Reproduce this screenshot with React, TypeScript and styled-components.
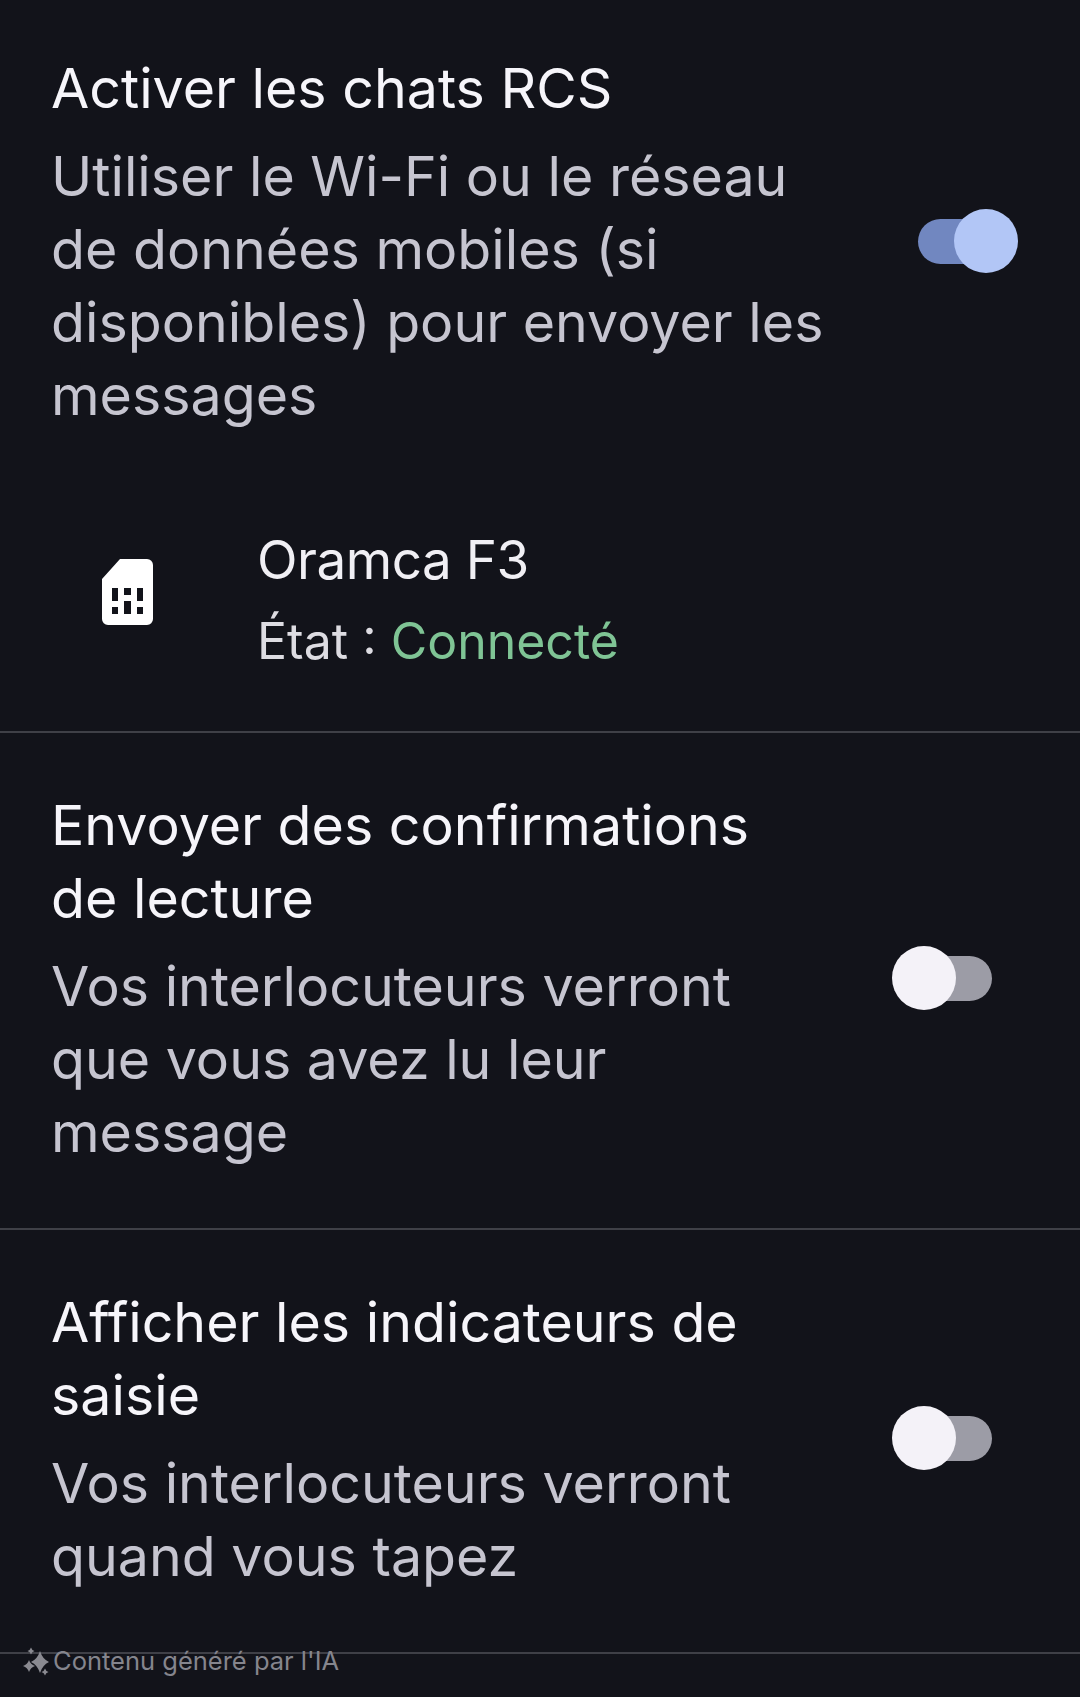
import React from 'react';
import styled, { createGlobalStyle } from 'styled-components';

const GlobalStyle = createGlobalStyle`
    html, body {
        margin: 0;
        padding: 0;
        background: #12131a;
    }
`;

const Page = styled.div`
    width: 1080px;
    height: 1697px;
    overflow: hidden;
    position: relative;
    background: #12131a;
    font-family: Inter, Roboto, sans-serif;
`;

const Section = styled.section<{ $top: number; $bottom: number; $divider?: boolean }>`
    padding: ${(p) => p.$top}px 0 ${(p) => p.$bottom}px 51px;
    border-bottom: ${(p) => (p.$divider ? '2px solid #3f4047' : 'none')};
`;

const Row = styled.div`
    display: flex;
    align-items: center;
    justify-content: space-between;
    padding-right: 88px;
`;

const TextBlock = styled.div<{ $width: number }>`
    width: ${(p) => p.$width}px;
    display: flex;
    flex-direction: column;
    gap: 15px;
`;

const Title = styled.div`
    font-size: 55.5px;
    line-height: 73px;
    color: #f6f5fa;
`;

const Subtitle = styled.div`
    font-size: 55.5px;
    line-height: 73px;
    color: #c6c5d0;
`;

const Track = styled.div<{ $on?: boolean }>`
    position: relative;
    width: 74px;
    height: 45px;
    border-radius: 23px;
    background: ${(p) => (p.$on ? '#7187c0' : '#9c9ca6')};
`;

const Thumb = styled.div<{ $on?: boolean }>`
    position: absolute;
    top: -10px;
    ${(p) => (p.$on ? 'right: -26px;' : 'left: -26px;')}
    width: 64px;
    height: 64px;
    border-radius: 50%;
    background: ${(p) => (p.$on ? '#b2c6f6' : '#f4f2f8')};
`;

const SimRow = styled.div`
    display: flex;
    align-items: center;
    gap: 104px;
    padding: 88px 0 50px 51px;
`;

const SimIcon = styled.svg`
    width: 51px;
    height: 66px;
    margin-bottom: 16px;
    flex: none;
`;

const SimText = styled.div`
    display: flex;
    flex-direction: column;
`;

const SimName = styled.div`
    font-size: 53px;
    line-height: 82px;
    letter-spacing: -0.5px;
    color: #f0eff4;
`;

const SimStatus = styled.div`
    font-size: 50px;
    line-height: 80px;
    color: #dddce2;
`;

const Connected = styled.span`
    color: #7fc495;
`;

const AiBadge = styled.div`
    position: absolute;
    left: 22px;
    top: 1645px;
    display: flex;
    align-items: center;
    gap: 1px;
    font-size: 25.5px;
    line-height: 30px;
    color: #85858d;
`;

const Toggle = ({ on }: { on?: boolean }) => (
    <Track $on={on}>
        <Thumb $on={on} />
    </Track>
);

const App = () => {
    return (
        <Page>
            <GlobalStyle />
            <Section $top={51} $bottom={0}>
                <Row>
                    <TextBlock $width={790}>
                        <Title>Activer les chats RCS</Title>
                        <Subtitle>
                            Utiliser le Wi-Fi ou le réseau de données mobiles (si disponibles) pour envoyer les messages
                        </Subtitle>
                    </TextBlock>
                    <Toggle on />
                </Row>
            </Section>
            <Section $top={0} $bottom={0} $divider>
                <SimRow>
                    <SimIcon viewBox="0 0 51 66">
                        <path
                            fill="#ffffff"
                            fillRule="evenodd"
                            d="M18 0H45a6 6 0 0 1 6 6V60a6 6 0 0 1-6 6H6a6 6 0 0 1-6-6V20ZM10 29h6v13h-6ZM10 48h6v7h-6ZM22 29h7v7h-7ZM22 42h7v13h-7ZM35 29h6v13h-6ZM35 48h6v7h-6Z"
                        />
                    </SimIcon>
                    <SimText>
                        <SimName>Oramca F3</SimName>
                        <SimStatus>
                            État : <Connected>Connecté</Connected>
                        </SimStatus>
                    </SimText>
                </SimRow>
            </Section>
            <Section $top={55} $bottom={60} $divider>
                <Row>
                    <TextBlock $width={720}>
                        <Title>Envoyer des confirmations de lecture</Title>
                        <Subtitle>Vos interlocuteurs verront que vous avez lu leur message</Subtitle>
                    </TextBlock>
                    <Toggle />
                </Row>
            </Section>
            <Section $top={55} $bottom={60} $divider>
                <Row>
                    <TextBlock $width={720}>
                        <Title>Afficher les indicateurs de saisie</Title>
                        <Subtitle>Vos interlocuteurs verront quand vous tapez</Subtitle>
                    </TextBlock>
                    <Toggle />
                </Row>
            </Section>
            <AiBadge>
                <svg width="30" height="32" viewBox="0 0 30 32">
                    <path
                        fill="#8a8a91"
                        d="M18 6Q20.500 14 27 17Q20.500 20 18 28Q15.500 20 9 17Q15.500 14 18 6ZM7 15Q8.500 19.500 13 21Q8.500 22.500 7 27Q5.500 22.500 1 21Q5.500 19.500 7 15ZM9 2.500Q9.800 5.200 12.500 6Q9.800 6.800 9 9.500Q8.200 6.800 5.500 6Q8.200 5.200 9 2.500ZM23 23.500Q23.800 26.200 26.500 27Q23.800 27.800 23 30.500Q22.200 27.800 19.500 27Q22.200 26.200 23 23.500Z"
                    />
                </svg>
                Contenu généré par l'IA
            </AiBadge>
        </Page>
    );
};

export default App;
